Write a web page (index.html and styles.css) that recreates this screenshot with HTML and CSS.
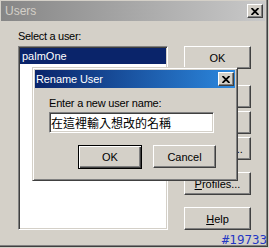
FILE: index.html
```html
<!DOCTYPE html>
<html lang="zh-Hant">
<head>
  <meta charset="UTF-8" />
  <meta name="viewport" content="width=device-width, initial-scale=1.0"/>
  <title>Users</title>
  <link rel="stylesheet" href="styles.css">
</head>
<body>
  <div class="window">
    <div class="titlebar inactive">
      <span class="title">Users</span>
      <span class="close-btn">
        <svg width="8" height="7" viewBox="0 0 8 7"><path d="M0.5 0 L7.5 7 M7.5 0 L0.5 7" stroke="#000" stroke-width="1.8" fill="none"/></svg>
      </span>
    </div>

    <div class="content">
      <div class="user-pane">
        <div class="field-label">Select a user:</div>
        <div class="listbox">
          <div class="list-item selected">palmOne</div>
        </div>
      </div>

      <div class="button-col">
        <button class="btn btn-ok">OK</button>
        <button class="btn btn-new">New...</button>
        <button class="btn btn-delete">Delete</button>
        <button class="btn btn-rename">Rename...</button>
        <button class="btn btn-profiles"><u>P</u>rofiles...</button>
        <button class="btn btn-help"><u>H</u>elp</button>
      </div>
    </div>

    <!-- modal on top of the Users window -->
    <div class="dialog">
      <div class="titlebar active">
        <span class="title">Rename User</span>
        <span class="close-btn">
          <svg width="8" height="7" viewBox="0 0 8 7"><path d="M0.5 0 L7.5 7 M7.5 0 L0.5 7" stroke="#000" stroke-width="1.8" fill="none"/></svg>
        </span>
      </div>
      <div class="dialog-body">
        <label for="newName">Enter a new user name:</label>
        <input type="text" id="newName" value="在這裡輸入想改的名稱">
        <div class="dialog-actions">
          <button class="btn btn-default">OK</button>
          <button class="btn btn-cancel">Cancel</button>
        </div>
      </div>
    </div>

    <span class="stamp">#19733</span>
  </div>
</body>
</html>
```

FILE: styles.css
```css
body {
  margin: 0;
  font-family: "Liberation Sans", Arial, sans-serif;
  font-size: 11px;
  color: #000;
  background-color: #d4d0c8;
}

.window {
  position: relative;
  width: 268px;
  height: 247px;
  box-sizing: border-box;
  padding: 1px 3px 3px 1px;
  background-color: #d4d0c8;
  box-shadow: inset -1px -1px #404040, inset -2px -2px #808080;
}

/* title bars */
.titlebar {
  display: flex;
  align-items: center;
  justify-content: space-between;
  height: 20px;
}

.titlebar.inactive {
  background: linear-gradient(to right, #868686, #c9c9c9);
  color: #d4d0c8;
}

.titlebar.inactive .title {
  font-size: 12px;
  padding-left: 4px;
}

.titlebar.active {
  height: 18px;
  background: linear-gradient(to right, #0a246a, #2c88de);
  color: #fff;
}

.titlebar.active .title {
  font-size: 11px;
  padding-left: 1px;
  letter-spacing: -0.1px;
}

.close-btn {
  display: flex;
  align-items: center;
  justify-content: center;
  width: 16px;
  height: 14px;
  box-sizing: border-box;
  margin-right: 2px;
  background-color: #d4d0c8;
  border: 1px solid;
  border-color: #fff #404040 #404040 #fff;
  box-shadow: inset -1px -1px #808080;
}

.titlebar.active .close-btn {
  margin-right: 1px;
}

/* main area */
.content {
  display: flex;
  padding: 9px 0 0 17px;
}

.field-label {
  line-height: 13px;
  margin-bottom: 3px;
  letter-spacing: -0.3px;
}

.listbox {
  width: 150px;
  height: 184px;
  box-sizing: border-box;
  background-color: #fff;
  border: 1px solid;
  border-color: #808080 #fff #fff #808080;
  box-shadow: inset 1px 1px #404040, inset -1px -1px #d4d0c8;
  padding: 1px;
}

.list-item {
  height: 16px;
  line-height: 16px;
  padding-left: 2px;
}

.list-item.selected {
  background-color: #0a246a;
  color: #fff;
}

.button-col {
  display: flex;
  flex-direction: column;
  margin-left: 16px;
  padding-top: 16px;
}

.btn {
  width: 67px;
  height: 23px;
  padding: 0;
  box-sizing: border-box;
  font-family: inherit;
  font-size: 11px;
  color: #000;
  background-color: #d4d0c8;
  border: 1px solid;
  border-color: #fff #404040 #404040 #fff;
  box-shadow: inset -1px -1px #808080;
}

.btn u {
  text-decoration: underline;
}

.btn-new {
  margin-top: 16px;
}

.btn-delete,
.btn-rename {
  margin-top: 3px;
}

.btn-profiles,
.btn-help {
  margin-top: 12px;
}

/* rename dialog */
.dialog {
  position: absolute;
  left: 32px;
  top: 67px;
  width: 206px;
  height: 114px;
  box-sizing: border-box;
  padding: 2px;
  background-color: #d4d0c8;
  border: 1px solid;
  border-color: #d4d0c8 #404040 #404040 #d4d0c8;
  box-shadow: inset 1px 1px #fff, inset -1px -1px #808080;
}

.dialog-body {
  display: flex;
  flex-direction: column;
  padding: 9px 0 0 14px;
}

.dialog-body label {
  line-height: 13px;
  margin-bottom: 2px;
  letter-spacing: -0.2px;
}

.dialog-body input {
  width: 165px;
  height: 21px;
  box-sizing: border-box;
  margin: 0;
  padding: 0 0 0 1px;
  font-family: "Noto Sans CJK TC", "Noto Sans CJK SC", sans-serif;
  font-size: 12px;
  color: #000;
  background-color: #fff;
  border: 1px solid;
  border-color: #808080 #fff #fff #808080;
  box-shadow: inset 1px 1px #404040, inset -1px -1px #d4d0c8;
  outline: none;
}

.dialog-actions {
  display: flex;
  align-items: flex-start;
  margin-top: 12px;
}

.btn-default {
  width: 64px;
  height: 24px;
  margin-left: 29px;
  border: 1px solid #000;
  box-shadow: inset 1px 1px #fff, inset -1px -1px #404040, inset -2px -2px #808080;
}

.btn-cancel {
  width: 63px;
  margin-left: 11px;
}

.stamp {
  position: absolute;
  right: 1px;
  bottom: 1px;
  font-family: "DejaVu Sans Mono", monospace;
  font-size: 12.5px;
  line-height: 12px;
  color: #2437c4;
}
```
